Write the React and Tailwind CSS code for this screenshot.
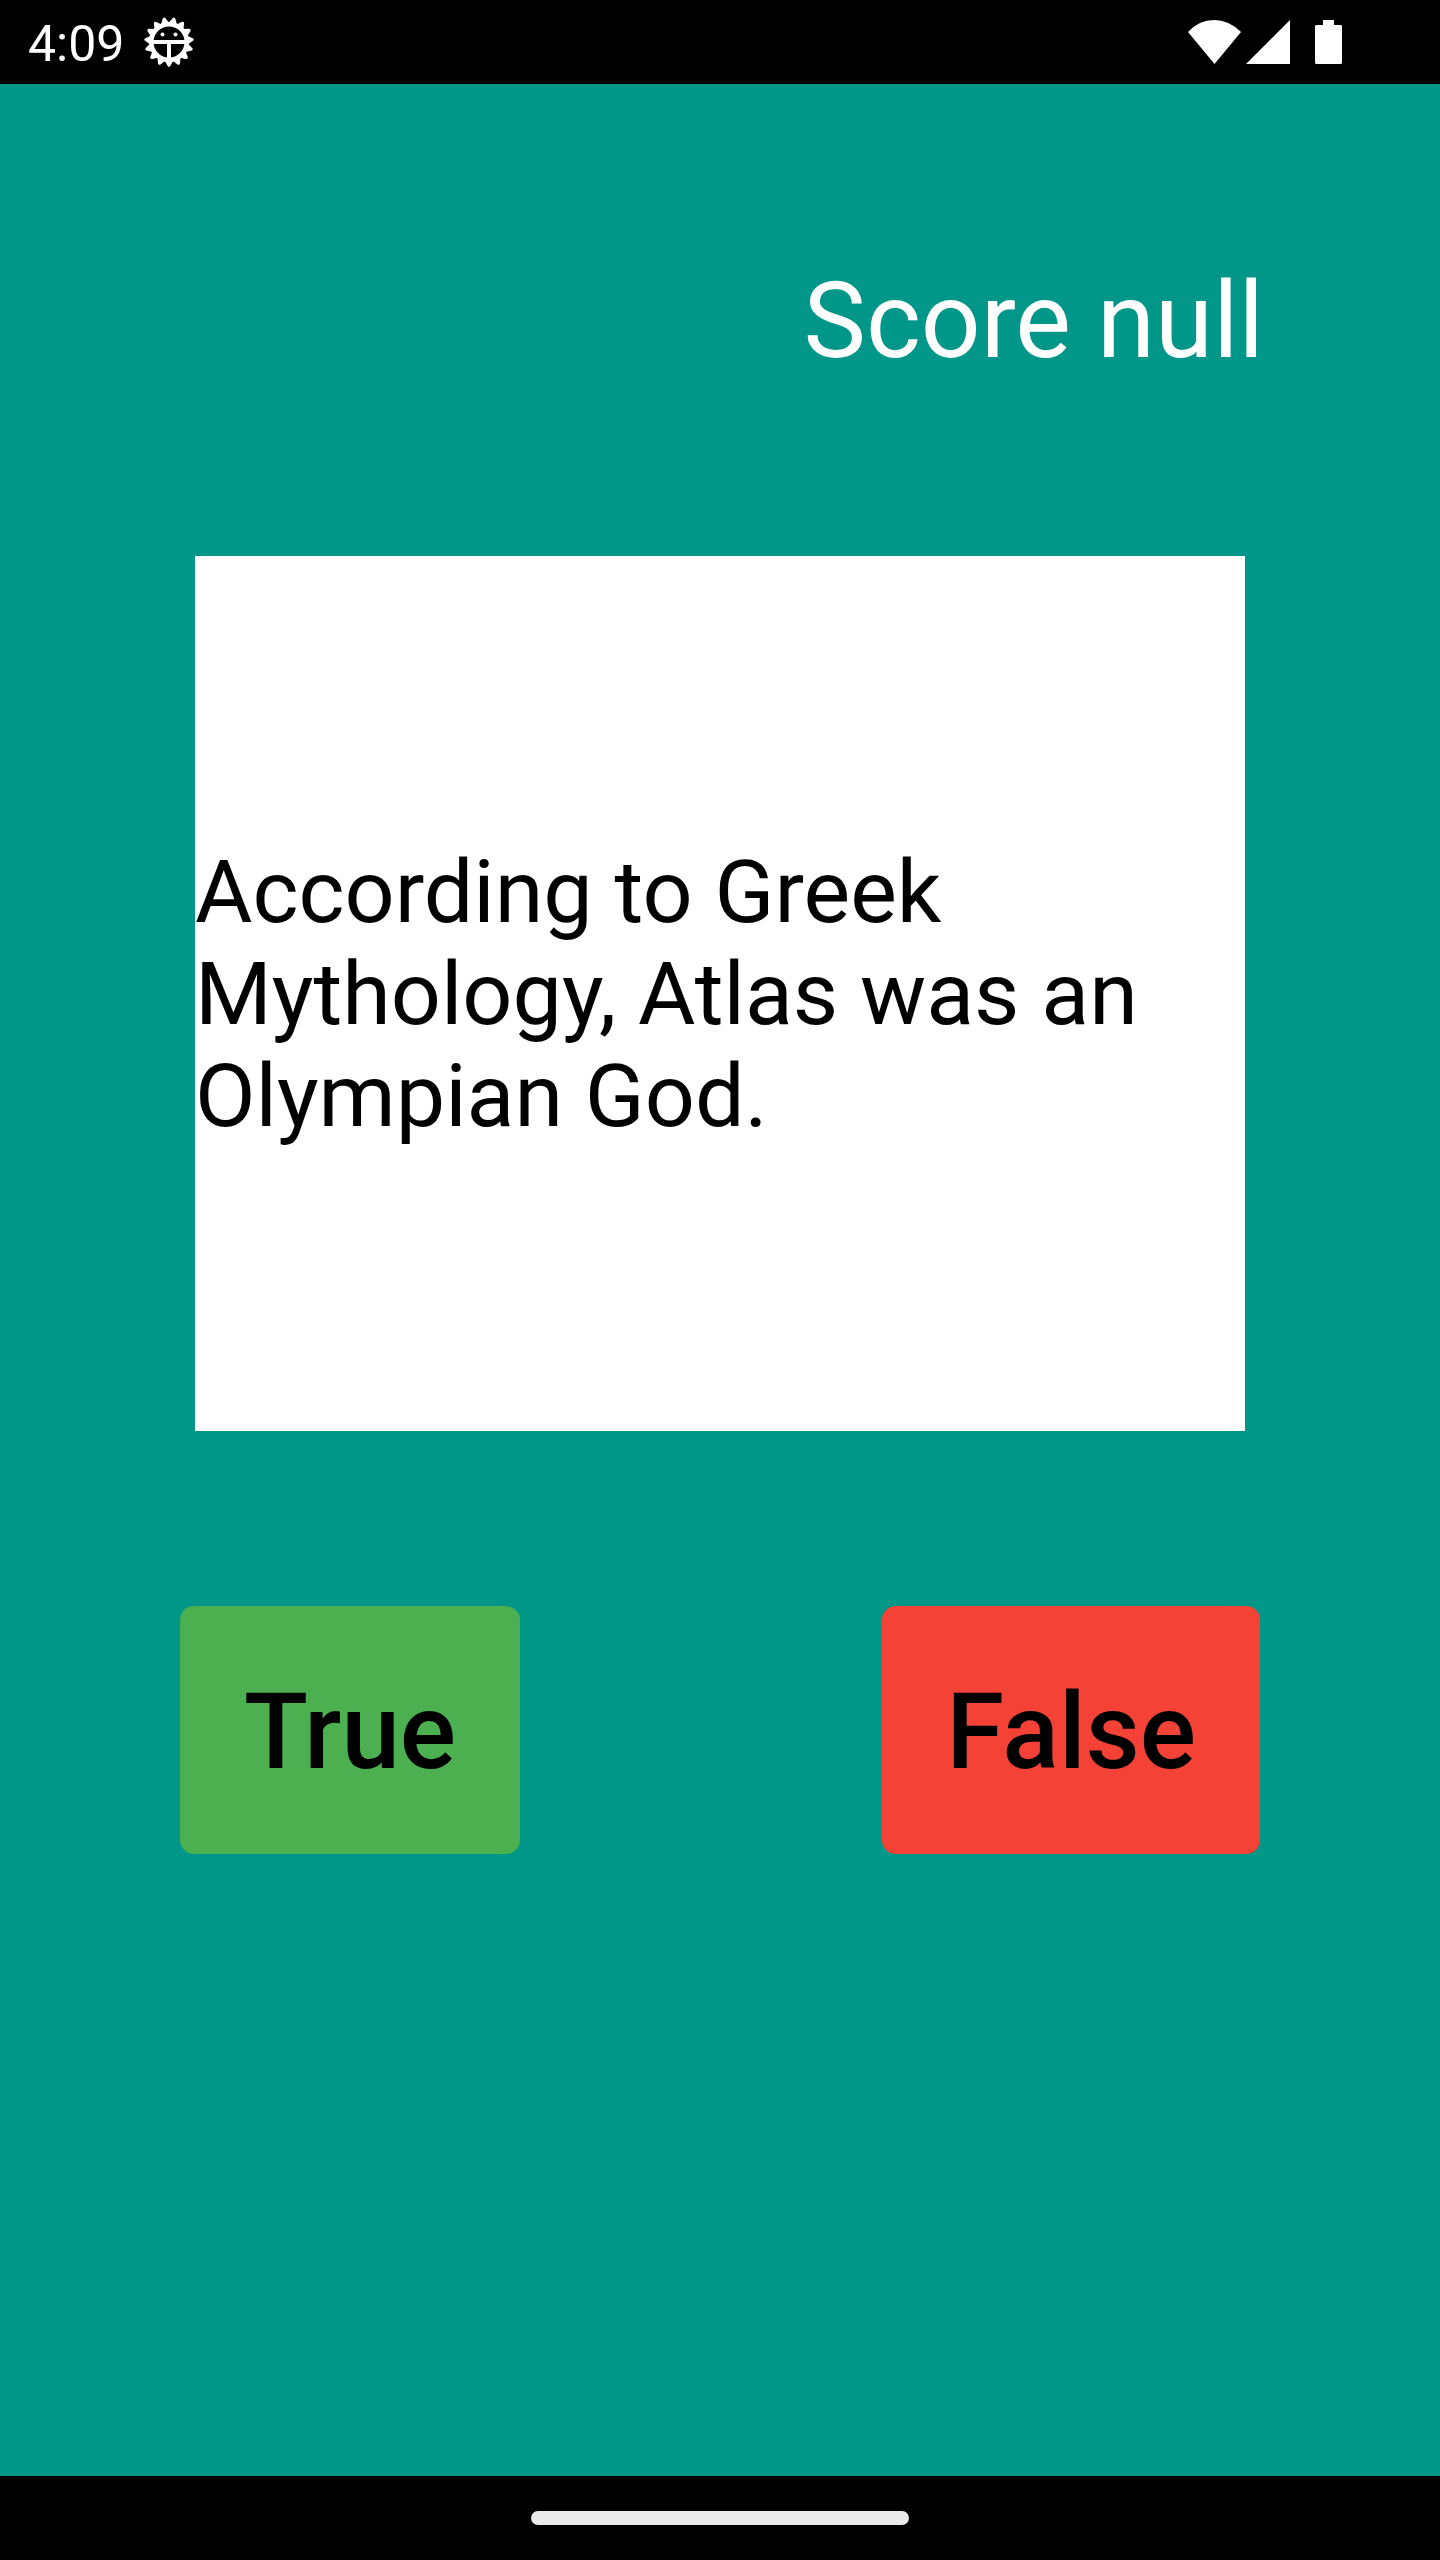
const TEETH = Array.from({ length: 15 }, (_, i) => (i * 360) / 15 + 12);

function BugIcon() {
  return (
    <svg viewBox="-26 -26 52 52" className="size-[52px]" aria-hidden="true">
      <circle r="17.8" fill="none" stroke="white" strokeWidth="4.6" />
      {TEETH.map((a) => (
        <path
          key={a}
          d="M-4 -19L-1.600 -23.600Q0 -26.200 1.600 -23.600L4 -19Z"
          fill="white"
          transform={`rotate(${a})`}
        />
      ))}
      <path d="M-17 0H17M0 0V18" stroke="white" strokeWidth="4" />
      <circle cx="-6.5" cy="-7.5" r="2" fill="white" />
      <circle cx="6.5" cy="-7.5" r="2" fill="white" />
    </svg>
  );
}

function StatusBar() {
  return (
    <header className="flex h-[84px] shrink-0 items-center justify-between bg-black pl-7 pr-[98px] text-white">
      <div className="flex items-center gap-[19px]">
        <span className="pt-1 text-[50px] leading-none">4:09</span>
        <BugIcon />
      </div>
      <svg viewBox="0 0 154 46" className="h-[46px] w-[154px]" fill="white" aria-hidden="true">
        <path d="M0 13Q11 1 26 1T53 13L26.500 45Z" />
        <path d="M102 1V45H58Z" />
        <path d="M135 1h11v5h7l1 1v37l-1 1h-25l-1-1V7l1-1h7Z" />
      </svg>
    </header>
  );
}

export default function App() {
  return (
    <div className="flex min-h-screen flex-col bg-[#009688] font-['Roboto',sans-serif]">
      <StatusBar />
      <main className="flex grow flex-col px-44 pt-44">
        <p className="text-right text-[105px] leading-[124px] text-white">Score null</p>
        <section className="mx-auto mt-[172px] flex h-[875px] w-full max-w-[1050px] items-center bg-white">
          <p className="text-[88px] leading-[102px] text-black">
            According to Greek Mythology, Atlas was an Olympian God.
          </p>
        </section>
        <div className="mt-[175px] flex justify-between px-1">
          <button type="button" className="h-[248px] rounded-[14px] bg-[#4caf50] px-16 pt-1 text-[105px] font-medium leading-none text-black">
            True
          </button>
          <button type="button" className="h-[248px] rounded-[14px] bg-[#f44336] px-16 pt-1 text-[105px] font-medium leading-none text-black">
            False
          </button>
        </div>
      </main>
      <footer className="flex h-[84px] shrink-0 items-center justify-center bg-black">
        <div className="h-[14px] w-[378px] rounded-[7px] bg-[#ebebeb]" />
      </footer>
    </div>
  );
}
